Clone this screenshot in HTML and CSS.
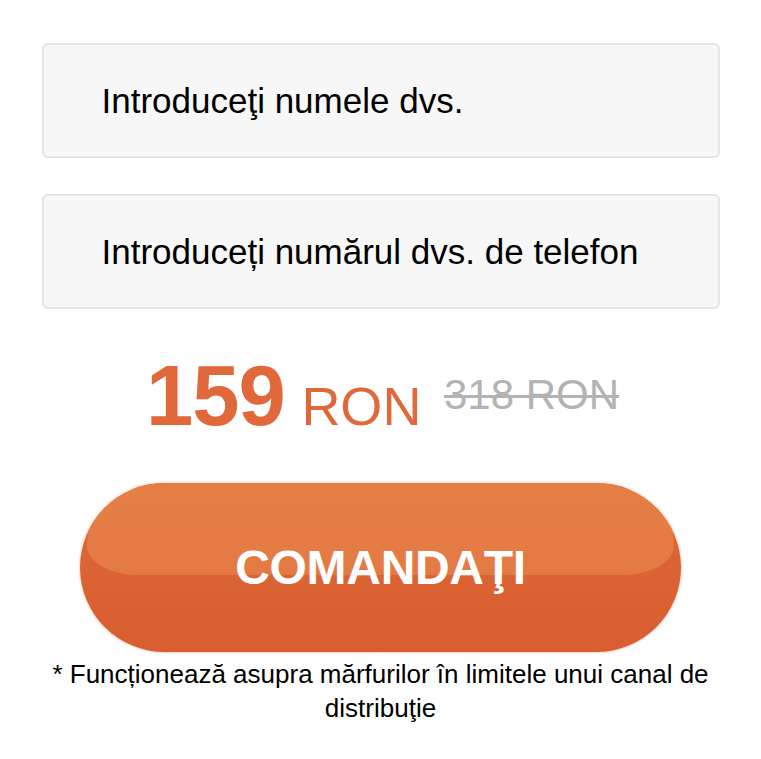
FILE: index.html
```html
<!DOCTYPE html>
<html lang="ro">
<head>
    <meta charset="UTF-8">
    <meta name="viewport" content="width=device-width, initial-scale=1.0">
    <title>Comandă</title>
    <link rel="stylesheet" href="styles.css">
</head>
<body>
    <form class="order-form">
        <input class="field" type="text" name="name" placeholder="Introduceţi numele dvs.">
        <input class="field" type="tel" name="phone" placeholder="Introduceți numărul dvs. de telefon">

        <div class="price">
            <span class="price-new">159</span>
            <span class="price-cur">RON</span>
            <span class="price-old">318 RON</span>
        </div>

        <button class="order-btn" type="button"><span class="order-label">COMANDAŢI</span></button>

        <p class="note">* Funcționează asupra mărfurilor în limitele unui canal de distribuţie</p>
    </form>
</body>
</html>
```

FILE: styles.css
```css
:root {
    --orange: #e0683a;
    --grey: #b3b3b3;
    --field-bg: #f7f7f7;
    --field-border: #e4e4e4;
}

* {
    margin: 0;
    padding: 0;
    box-sizing: border-box;
}

body {
    font-family: "Liberation Sans", Arial, sans-serif;
    background: #fff;
    color: #000;
}

.order-form {
    width: 678px;
    margin: 0 auto;
    padding-top: 43px;
    display: flex;
    flex-direction: column;
}

.field {
    height: 115px;
    padding-left: 58px;
    font-family: inherit;
    font-size: 35px;
    color: #000;
    background: var(--field-bg);
    border: 2px solid var(--field-border);
    border-radius: 6px;
    outline: none;
}

.field + .field {
    margin-top: 36px;
}

.field::placeholder {
    color: #000;
    opacity: 1;
}

.price {
    margin-top: 44px;
    padding-left: 4px;
    text-align: center;
    line-height: 1;
    font-size: 85px;
    white-space: nowrap;
}

.price-new {
    font-weight: 700;
    color: var(--orange);
    letter-spacing: -1px;
}

.price-cur {
    font-size: 54px;
    color: var(--orange);
    margin-left: -7px;
}

.price-old {
    font-size: 42px;
    color: var(--grey);
    text-decoration: line-through;
    text-decoration-thickness: 3px;
    vertical-align: 16px;
    margin-left: -1px;
}

.order-btn {
    position: relative;
    align-self: center;
    width: 601px;
    height: 169px;
    margin-top: 45px;
    border: none;
    border-radius: 85px;
    background: linear-gradient(#de6a37, #d95d30);
    box-shadow: 0 0 3px rgba(214, 90, 45, 0.5);
    overflow: hidden;
    cursor: pointer;
    font-family: inherit;
    font-size: 48px;
    font-weight: 700;
    letter-spacing: -0.3px;
    color: #fff;
}

/* glossy top half */
.order-btn::before {
    content: "";
    position: absolute;
    top: 0;
    left: 7px;
    right: 7px;
    height: 92px;
    border-radius: 85px 85px 70px 70px / 85px 85px 40px 40px;
    background: linear-gradient(#e57f46, #e47a43);
}

.order-label {
    position: relative;
    z-index: 1;
}

.note {
    margin-top: 5px;
    font-size: 26px;
    line-height: 34px;
    text-align: center;
}
```
